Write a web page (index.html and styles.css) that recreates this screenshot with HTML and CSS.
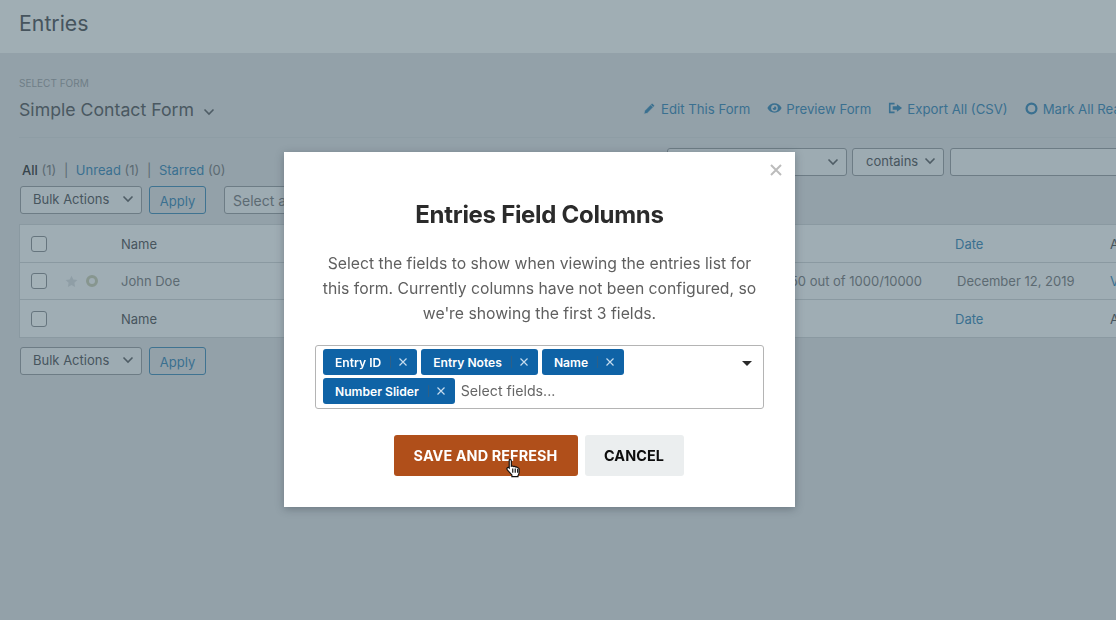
FILE: index.html
```html
<!DOCTYPE html>
<html lang="en">
<head>
    <meta charset="UTF-8">
    <title>Entries</title>
    <link rel="stylesheet" href="styles.css">
</head>
<body>
    <div class="page">
        <header class="top-bar"><h1>Entries</h1></header>
        <main class="content">
            <div class="form-head">
                <div class="form-pick">
                    <div class="form-label">SELECT FORM</div>
                    <div class="form-name">Simple Contact Form
                        <svg class="chev chev-lg" viewBox="0 0 12 8"><path d="M1.5 1.5 6 6l4.500-4.500"/></svg>
                    </div>
                </div>
                <nav class="form-links">
                    <a href="#"><svg viewBox="0 0 14 14"><path d="M1 13l.8-3.600 7.400-7.500a1 1 0 0 1 1.400 0l1.400 1.400a1 1 0 0 1 0 1.400L4.600 12.200zM8.200 3l2.700 2.700" class="cut"/></svg>Edit This Form</a>
                    <a href="#"><svg class="wide" viewBox="0 0 16 12"><path fill-rule="evenodd" d="M8 1c3.300 0 6 2 7.600 5C14 9 11.300 11 8 11S2 9 .4 6C2 3 4.700 1 8 1zm0 1.400A3.600 3.600 0 1 0 8 9.600 3.600 3.600 0 0 0 8 2.400zM8 4a2 2 0 1 1-2 2c.8.3 2.200-.6 2-2z"/></svg>Preview Form</a>
                    <a href="#"><svg class="wide" viewBox="0 0 16 12"><path d="M1 .5h6v1.700H2.700v7.600H7v1.700H1zM9.500 2 15 6l-5.500 4V7.800H5V4.200h4.500z"/></svg>Export All (CSV)</a>
                    <a href="#"><svg viewBox="0 0 14 14"><circle cx="7" cy="7" r="5.300" class="ring"/></svg>Mark All Read</a>
                </nav>
            </div>

            <div class="filter-row">
                <div class="views"><b>All</b> (1) <i>|</i> <a href="#">Unread</a> (1) <i>|</i> <a href="#">Starred</a> (0)</div>
                <div class="filters">
                    <div class="ctl ctl-field"><svg class="chev" viewBox="0 0 12 8"><path d="M1.500 1.500 6 6l4.500-4.500"/></svg></div>
                    <div class="ctl ctl-op">contains <svg class="chev" viewBox="0 0 12 8"><path d="M1.500 1.500 6 6l4.500-4.500"/></svg></div>
                    <div class="ctl ctl-value"></div>
                </div>
            </div>

            <div class="actions-row">
                <div class="ctl ctl-bulk">Bulk Actions <svg class="chev" viewBox="0 0 12 8"><path d="M1.500 1.500 6 6l4.500-4.500"/></svg></div>
                <a href="#" class="apply">Apply</a>
                <div class="ctl ctl-date">Select a date range</div>
            </div>

            <div class="entries">
                <div class="row">
                    <div class="cell-check"><span class="check"></span></div>
                    <div class="cell-main">Name</div>
                    <div class="cell-date"><a href="#">Date</a></div>
                    <div>Actions</div>
                </div>
                <div class="row row-data">
                    <div class="cell-check">
                        <span class="check"></span>
                        <svg class="star" viewBox="0 0 14 14"><path d="M7 .8l1.900 4 4.400.6-3.200 3 .8 4.400L7 10.700 3.100 12.800l.8-4.400-3.200-3 4.400-.6z"/></svg>
                        <span class="dot"></span>
                    </div>
                    <div class="cell-main"><span>John Doe</span><span class="cell-score">50 out of 1000/10000</span></div>
                    <div class="cell-date cell-date-val">December 12, 2019</div>
                    <div><a href="#">View</a></div>
                </div>
                <div class="row">
                    <div class="cell-check"><span class="check"></span></div>
                    <div class="cell-main">Name</div>
                    <div class="cell-date"><a href="#">Date</a></div>
                    <div>Actions</div>
                </div>
            </div>

            <div class="actions-row actions-bottom">
                <div class="ctl ctl-bulk">Bulk Actions <svg class="chev" viewBox="0 0 12 8"><path d="M1.500 1.500 6 6l4.500-4.500"/></svg></div>
                <a href="#" class="apply">Apply</a>
            </div>
        </main>
    </div>

    <div class="modal">
        <svg class="modal-close" viewBox="0 0 12 12"><path d="M1 1l10 10M11 1 1 11"/></svg>
        <h2>Entries Field Columns</h2>
        <p>Select the fields to show when viewing the entries list for this form. Currently columns have not been configured, so we're showing the first 3 fields.</p>
        <div class="picker">
            <div class="tags">
                <span class="tag">Entry ID<em></em><svg viewBox="0 0 8 8"><path d="M.5.500l7 7M7.500.500l-7 7"/></svg></span>
                <span class="tag">Entry Notes<em></em><svg viewBox="0 0 8 8"><path d="M.5.500l7 7M7.500.500l-7 7"/></svg></span>
                <span class="tag">Name<em></em><svg viewBox="0 0 8 8"><path d="M.5.500l7 7M7.500.500l-7 7"/></svg></span>
                <span class="tag">Number Slider<em></em><svg viewBox="0 0 8 8"><path d="M.5.500l7 7M7.500.500l-7 7"/></svg></span>
                <span class="picker-hint">Select fields...</span>
            </div>
            <span class="caret"></span>
        </div>
        <div class="modal-buttons">
            <a href="#" class="btn btn-save">SAVE AND REFRESH</a>
            <a href="#" class="btn btn-cancel">CANCEL</a>
        </div>
        <svg class="pointer" viewBox="0 0 14 18"><path d="M3.500 1c.9 0 1.500.6 1.500 1.500V7.300l1-.2c.6 0 1 .2 1.300.6.6-.3 1.300-.1 1.600.4.700-.3 1.400 0 1.700.7.800-.2 1.600.3 1.600 1.200v3.400c0 1.100-.5 1.900-1 2.600V17H5.500v-1.500L1.400 11c-.7-.9-.7-1.700-.1-2.200.6-.5 1.200-.3 1.700.2V2.500C3 1.600 3 1 3.500 1z"/><path class="pointer-lines" d="M6.300 9.500v4M8.600 9.500v4M10.900 10v3.500"/></svg>
    </div>
</body>
</html>
```

FILE: styles.css
```css
:root {
    --page-bg: #93a1a9;
    --bar-bg: #a0aeb4;
    --row-bg: #9fadb4;
    --line: #8a99a1;
    --ctl-line: #6d7c85;
    --text: #47555e;
    --text-soft: #5c6a72;
    --link: #3a7090;
    --font-main: 'Inter', sans-serif;
}
html, body { height: 100%; }
body { margin: 0; background-color: var(--page-bg); color: var(--text); font-family: var(--font-main); overflow: hidden; }
a { color: inherit; text-decoration: none; }
svg { display: block; }

.page { width: 1190px; }
.top-bar { height: 53px; background-color: var(--bar-bg); padding-left: 19px; display: flex; align-items: center; box-sizing: border-box; padding-bottom: 7px; }
.top-bar h1 { margin: 0; font-size: 21.300px; font-weight: 400; color: #46545d; }
.content { padding: 24px 0 0 19px; }

.form-head { display: flex; align-items: flex-start; height: 60px; border-bottom: 1px solid #8e9da5; margin-bottom: 25px; }
.form-pick { width: 624px; flex: none; }
.form-label { font-size: 10px; line-height: 12px; color: #6f7e87; }
.form-name { margin-top: 9px; font-size: 17.700px; line-height: 24px; display: flex; align-items: center; gap: 9px; color: #4a5861; }
.form-links { margin-top: 23px; display: flex; gap: 17px; font-size: 13.200px; line-height: 18px; color: var(--link); white-space: nowrap; }
.form-links a { display: flex; align-items: center; gap: 5px; }
.form-links svg { width: 13px; height: 13px; fill: var(--link); margin-top: -1px; }
.form-links svg.wide { width: 15px; height: 12px; margin-top: -2px; margin-right: -1px; }
.form-links .cut { fill: var(--link); stroke: var(--page-bg); stroke-width: 0.7; }
.form-links .ring { fill: none; stroke: var(--link); stroke-width: 2.400; }

.chev { width: 12px; height: 8px; fill: none; stroke: #4f5d66; stroke-width: 1.600; flex: none; }
.chev-lg { margin-top: 3px; }

.filter-row { display: flex; align-items: flex-start; height: 38px; margin-top: -15px; }
.views { margin: 13px 0 0 3px; font-size: 13px; line-height: 18px; color: var(--text-soft); width: 645px; white-space: nowrap; }
.views b { font-weight: 500; color: #37444c; }
.views i { font-style: normal; margin: 0 4px; }
.views a { color: var(--link); }
.filters { display: flex; gap: 5px; }

.ctl { height: 28px; border: 1px solid var(--ctl-line); border-radius: 3px; box-sizing: border-box; background-color: #9dabb2; font-size: 13px; display: flex; align-items: center; color: var(--text); white-space: nowrap; }
.ctl-field { width: 180px; justify-content: flex-end; padding-right: 7px; }
.ctl-op { width: 92px; padding-left: 13px; gap: 6px; padding-bottom: 2px; }
.ctl-value { width: 220px; margin-left: 1px; }
.ctl-bulk { width: 122px; padding-left: 12px; justify-content: space-between; padding-right: 7px; padding-bottom: 2px; }
.ctl-date { width: 240px; margin-left: 11px; padding-left: 8px; font-size: 14px; color: var(--text-soft); }

.actions-row { display: flex; gap: 7px; margin-left: 1px; height: 28px; }
.actions-bottom { margin-top: 9px; }
.apply { width: 57px; height: 28px; box-sizing: border-box; border: 1px solid #3f7391; border-radius: 3px; color: var(--link); font-size: 13px; display: flex; align-items: center; justify-content: center; padding-top: 1px; }

.entries { margin-top: 10px; border: 1px solid var(--line); border-right: none; background-color: var(--row-bg); }
.row { display: grid; grid-template-columns: 101px 834px 155px 1fr; align-items: center; height: 37px; font-size: 13px; color: var(--text); }
.row + .row { border-top: 1px solid var(--line); }
.row-data { height: 36px; color: var(--text-soft); }
.row-data a { color: var(--link); }
.cell-check { display: flex; align-items: center; padding-left: 11px; }
.check { width: 16px; height: 16px; box-sizing: border-box; border: 1px solid #66757e; border-radius: 3px; background-color: #a3b1b7; }
.star { width: 13px; height: 13px; fill: #8f9ea6; margin-left: 18px; }
.dot { width: 12px; height: 12px; box-sizing: border-box; border: 3px solid #87968f; border-radius: 50%; margin-left: 8px; }
.cell-main { display: flex; justify-content: space-between; padding-right: 33px; }
.cell-date a { color: var(--link); }
.cell-date-val { padding-left: 2px; }

.modal { position: fixed; left: 284px; top: 152px; width: 511px; height: 355px; box-sizing: border-box; background-color: #fff; box-shadow: 0 2px 8px rgba(40, 50, 60, 0.35); padding: 48px 31px 0; text-align: center; }
.modal-close { position: absolute; top: 12px; right: 13px; width: 12px; height: 12px; fill: none; stroke: #bcbcbc; stroke-width: 2; }
.modal h2 { margin: 0; font-size: 24px; line-height: 30px; font-weight: 700; letter-spacing: -0.3px; color: #2b2b2b; }
.modal p { margin: 21px 0 0; padding: 0 7px; font-size: 15.750px; line-height: 25px; color: #5f5f5f; }
.picker { margin-top: 19px; width: 449px; height: 64px; box-sizing: border-box; border: 1px solid #b4b4b4; border-radius: 3px; padding: 3px 7px 0 7px; display: flex; justify-content: space-between; text-align: left; }
.tags { display: flex; flex-wrap: wrap; gap: 3px 4px; width: 340px; align-content: flex-start; }
.tag { height: 26px; box-sizing: border-box; background-color: #0f63a6; color: #fff; border-radius: 3px; font-size: 12.100px; font-weight: 600; display: flex; align-items: center; padding: 0 10px 0 12px; white-space: nowrap; }
.tag em { width: 1px; height: 12px; background-color: #2c5f88; margin: 0 8px 0 9px; }
.tag svg { width: 8px; height: 8px; fill: none; stroke: #c6dcee; stroke-width: 1.200; }
.picker-hint { font-size: 14.200px; line-height: 26px; color: #666; margin-left: 2px; }
.caret { width: 0; height: 0; border-left: 5px solid transparent; border-right: 5px solid transparent; border-top: 5px solid #2a2a2a; margin: 12px 4px 0 0; }
.modal-buttons { margin-top: 26px; margin-left: -2px; display: flex; justify-content: center; gap: 7px; }
.btn { height: 41px; box-sizing: border-box; border-radius: 3px; font-size: 14.400px; font-weight: 700; letter-spacing: 0.1px; display: flex; align-items: center; justify-content: center; }
.btn-save { width: 184px; background-color: #b04f1a; color: #fff; }
.btn-cancel { width: 99px; background-color: #ebeeef; color: #0d0d0d; }
.pointer { position: absolute; left: 222px; top: 306px; width: 15px; height: 20px; fill: #fff; stroke: #111; stroke-width: 1.100; }
.pointer-lines { fill: none; }
```
